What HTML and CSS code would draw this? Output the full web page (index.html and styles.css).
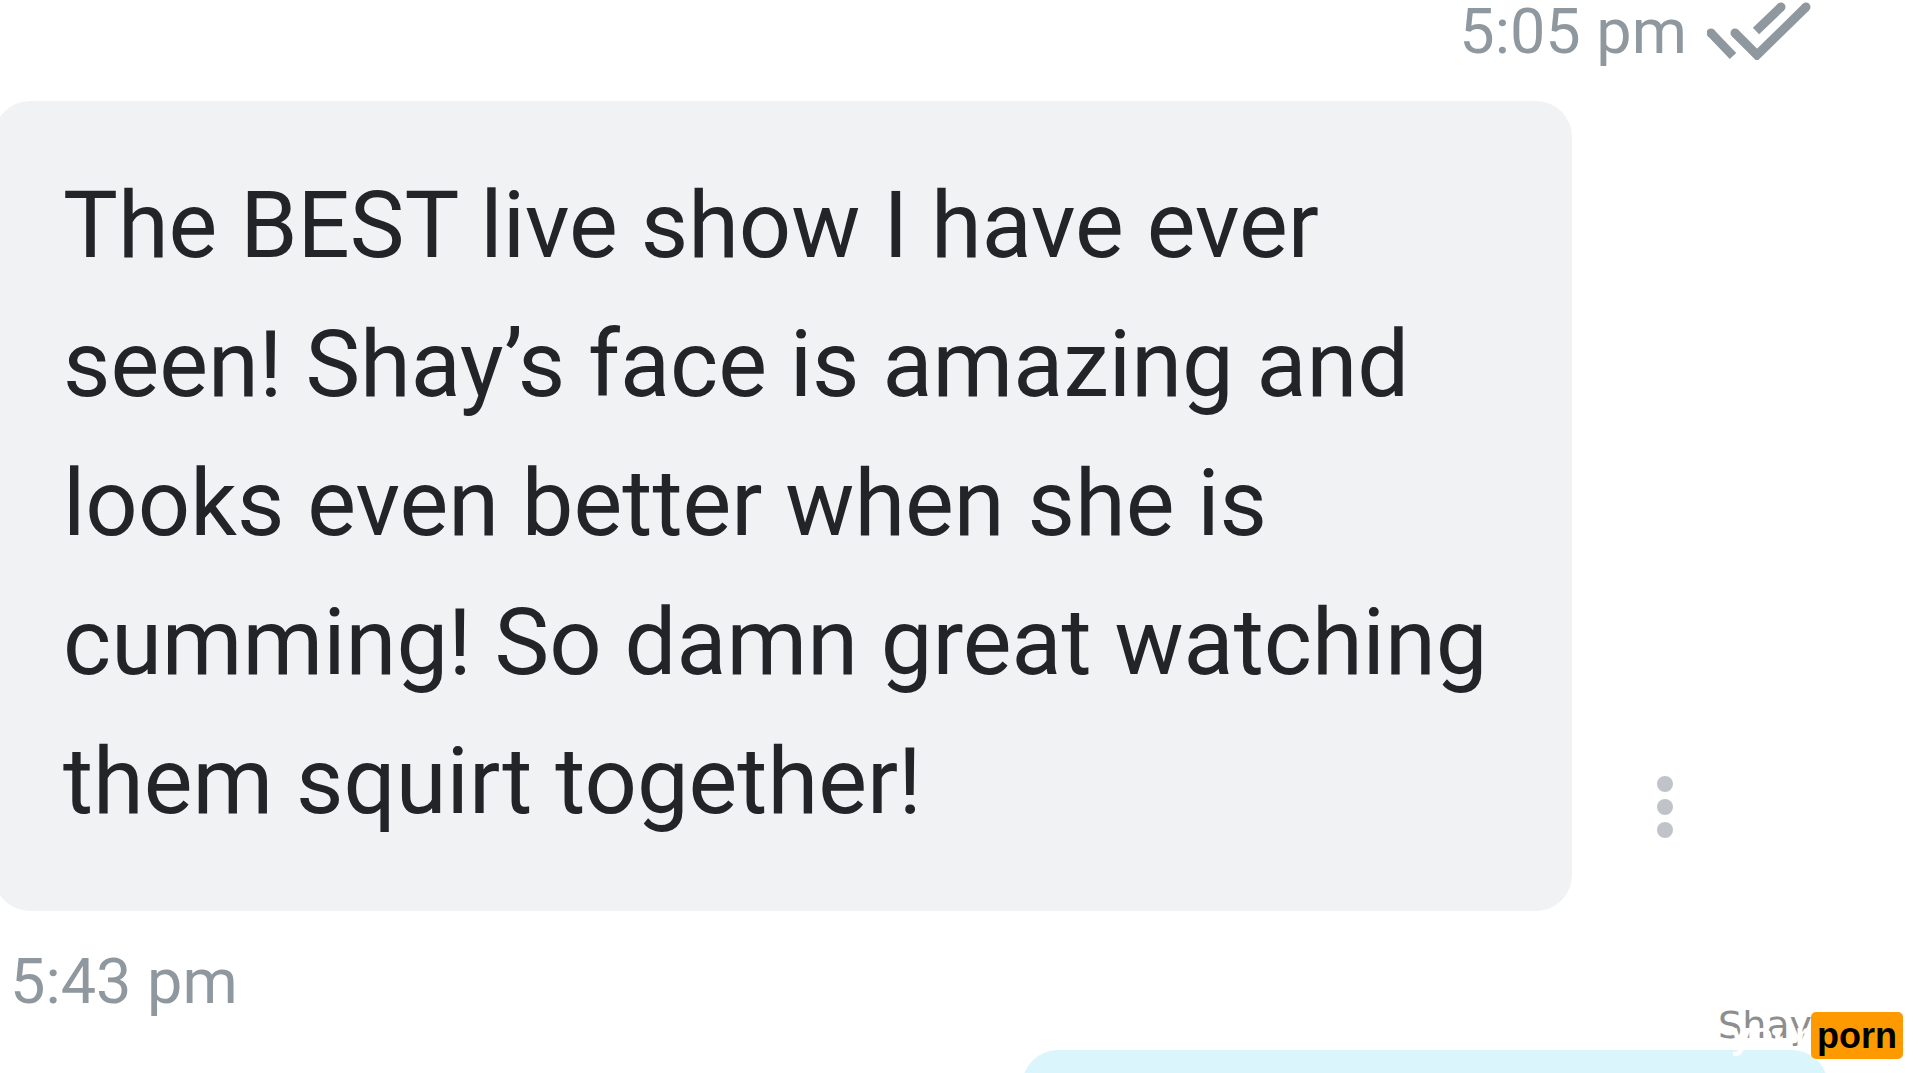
FILE: index.html
```html
<!DOCTYPE html>
<html lang="en">
<head>
<meta charset="utf-8">
<title>Messages</title>
<meta name="viewport" content="width=device-width, initial-scale=1">
<link rel="stylesheet" href="styles.css">
</head>
<body>
<main class="chat">
  <div class="meta meta-sent">
    <time datetime="17:05">5:05 pm</time>
    <svg class="checks" viewBox="0 0 104 60" role="img" aria-label="Read">
      <path class="stroke" d="M4 33 26 56M28 33 50 55 99 7M49 31 74 7"/>
      <path class="caps" d="M4 33h0M28 33h0M99 7h0M74 7h0"/>
    </svg>
  </div>
  <div class="row">
    <p class="bubble">The BEST live show I have ever seen! Shay’s face is amazing and looks even better when she is cumming! So damn great watching them squirt together!</p>
    <button class="more" type="button" aria-label="Message options"><i></i><i></i><i></i></button>
  </div>
  <div class="meta meta-received"><time datetime="17:43">5:43 pm</time></div>
  <div class="next"></div>
  <span class="user">Shay</span>
  <div class="brand"><span class="mark">your</span><span class="tag">porn</span></div>
</main>
</body>
</html>
```
FILE: styles.css
```css
* {
  box-sizing: border-box;
}

body {
  margin: 0;
  background: #fff;
  font-family: Roboto, "Liberation Sans", sans-serif;
}

.chat {
  position: relative;
  display: flex;
  flex-direction: column;
  height: 100vh;
  overflow: hidden;
}

.meta {
  display: flex;
  color: #8f989f;
  font-size: 63px;
  line-height: 64px;
}

.meta-sent {
  justify-content: flex-end;
  gap: 20px;
  padding: 0 109px 37px 0;
}

.checks {
  width: 104px;
  height: 60px;
  fill: none;
  stroke: #8f989f;
  stroke-width: 9;
}

.caps {
  stroke-linecap: round;
}

.row {
  display: flex;
  align-items: flex-end;
}

.bubble {
  flex: 1;
  margin: 0 0 0 -6px;
  padding: 55px 60px 60px 69px;
  border-radius: 36px;
  background: #f1f2f4;
  color: #222428;
  font-size: 92px;
  line-height: 139px;
}

.more {
  display: flex;
  flex-direction: column;
  gap: 7px;
  margin: 0 247px 73px 85px;
  padding: 0;
  border: 0;
  background: none;
}

.more i {
  width: 16px;
  height: 16px;
  border-radius: 50%;
  background: #c0c4c9;
}

.meta-received {
  padding: 39px 0 0 10px;
}

.next {
  flex: none;
  width: 42%;
  height: 120px;
  margin: 36px 92px 0 auto;
  border-radius: 36px;
  background: #daf5fc;
}

.user {
  position: absolute;
  right: 108px;
  bottom: 28px;
  color: #8e8e8e;
  font: 38px/40px "DejaVu Sans", sans-serif;
}

.brand {
  position: absolute;
  right: 17px;
  bottom: 14px;
  display: flex;
}

.mark {
  padding-right: 2px;
  color: #fff;
  font: bold 36px/47px "Liberation Sans", sans-serif;
}

.tag {
  padding: 0 6px;
  border-radius: 5px;
  background: #ff9900;
  color: #000;
  font: bold 36px/47px "Liberation Sans", sans-serif;
}
```
